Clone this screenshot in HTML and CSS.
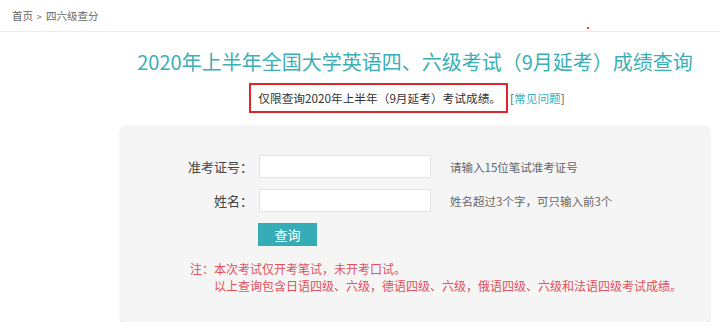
FILE: index.html
```html
<!DOCTYPE html>
<html lang="zh-CN">
<head>
<meta charset="utf-8">
<title>2020年上半年全国大学英语四、六级考试成绩查询</title>
<link rel="stylesheet" href="styles.css">
</head>
<body>
<header class="crumb">
  <a class="crumb-link" href="#">首页</a><span class="crumb-sep">&gt;</span><span class="crumb-cur">四六级查分</span>
  <span class="dot"></span>
</header>
<main class="wrap">
  <h1 class="title">2020年上半年全国大学英语四、六级考试（9月延考）成绩查询</h1>
  <p class="sub"><span class="sub-box">仅限查询2020年上半年（9月延考）考试成绩。</span><a class="faq" href="#">[<span class="faq-t">常见问题</span>]</a></p>
  <section class="card">
    <form class="form">
      <label class="lbl" for="zkz">准考证号：</label>
      <input class="inp" id="zkz" type="text">
      <span class="hint">请输入15位笔试准考证号</span>
      <label class="lbl" for="xm">姓名：</label>
      <input class="inp" id="xm" type="text">
      <span class="hint">姓名超过3个字，可只输入前3个</span>
      <span></span>
      <button class="btn" type="button">查询</button>
      <span></span>
    </form>
    <div class="notes">
      <p class="note">注：本次考试仅开考笔试，未开考口试。</p>
      <p class="note note-indent">以上查询包含日语四级、六级，德语四级、六级，俄语四级、六级和法语四级考试成绩。</p>
    </div>
  </section>
</main>
</body>
</html>
```

FILE: styles.css
```css
html, body {
  margin: 0;
  padding: 0;
  background: #ffffff;
  font-family: "Noto Sans CJK SC", "Noto Sans", sans-serif;
  color: #333;
}

.crumb {
  position: relative;
  height: 31px;
  line-height: 31px;
  padding-left: 12px;
  border-bottom: 1px solid #ececec;
  font-size: 10.5px;
  color: #666;
}
.crumb-link {
  color: #666;
  text-decoration: none;
}
.crumb-sep {
  margin: 0 4px;
  font-size: 9px;
}
.dot {
  position: absolute;
  left: 587px;
  top: 27px;
  width: 2px;
  height: 2px;
  background: #e8442a;
}

.wrap {
  margin-left: 120px;
  width: 590px;
}

.title {
  margin: 15px 0 0;
  font-size: 20px;
  line-height: 30px;
  font-weight: normal;
  color: #3aafb6;
  text-align: center;
  white-space: nowrap;
}

.sub {
  margin: 6px 0 0;
  text-align: center;
  font-size: 11.7px;
  line-height: 24px;
  color: #333;
  padding-right: 16px;
}
.sub-box {
  display: inline-block;
  border: 2px solid #e0262b;
  padding: 1px 5px 1px 7px;
  line-height: 24px;
}
.faq {
  margin-left: 2px;
  color: #555;
  text-decoration: none;
}
.faq-t {
  color: #3aafb6;
}

.card {
  margin-top: 12px;
  background: #f5f5f5;
  border-radius: 5px;
  box-shadow: 0 2px 2px rgba(0, 0, 0, 0.12);
  padding: 30px 0 28px;
}

.form {
  display: grid;
  grid-template-columns: 133px 172px auto;
  column-gap: 6px;
  row-gap: 11px;
  align-items: center;
}
.lbl {
  text-align: right;
  font-size: 13px;
  color: #444;
}
.inp {
  box-sizing: border-box;
  width: 172px;
  height: 23px;
  margin: 0;
  border: 1px solid #e3e3e3;
  background: #fff;
  border-radius: 0;
}
.hint {
  margin-left: 13px;
  font-size: 11.5px;
  color: #666;
}
.btn {
  box-sizing: border-box;
  width: 59px;
  height: 23px;
  margin: 0 0 0 -1px;
  padding: 0;
  border: none;
  background: #36adb6;
  color: #fff;
  font-family: inherit;
  font-size: 13px;
  cursor: pointer;
}

.notes {
  margin-top: 14px;
  padding-left: 70px;
}
.note {
  margin: 0;
  font-size: 12px;
  line-height: 17px;
  color: #e0505c;
}
.note-indent {
  padding-left: 24px;
}
```
